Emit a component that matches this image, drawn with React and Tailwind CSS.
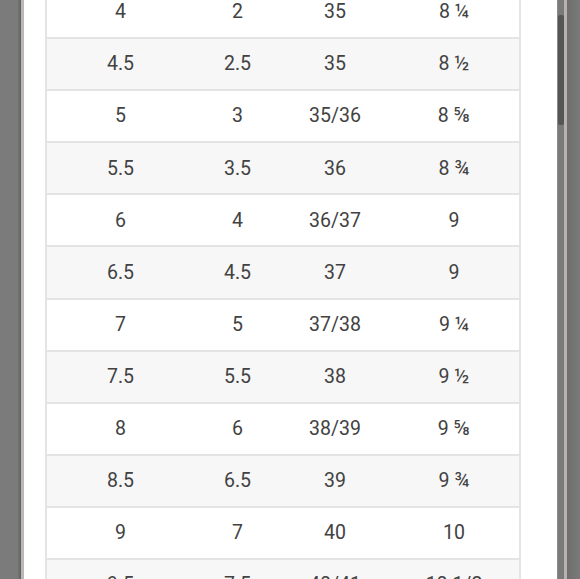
const rows = [
  ["4", "2", "35", "8 ¼"],
  ["4.5", "2.5", "35", "8 ½"],
  ["5", "3", "35/36", "8 ⅝"],
  ["5.5", "3.5", "36", "8 ¾"],
  ["6", "4", "36/37", "9"],
  ["6.5", "4.5", "37", "9"],
  ["7", "5", "37/38", "9 ¼"],
  ["7.5", "5.5", "38", "9 ½"],
  ["8", "6", "38/39", "9 ⅝"],
  ["8.5", "6.5", "39", "9 ¾"],
  ["9", "7", "40", "10"],
  ["9.5", "7.5", "40/41", "10 1/2"],
];

export default function App() {
  return (
    <div className="flex h-[579px] w-[580px] overflow-hidden bg-[#7a7a7a]" style={{ fontFamily: "Roboto, 'Noto Sans', sans-serif" }}>
      <div className="w-[18px] bg-[#7b7b7b]" />
      <div className="w-[3px] bg-gradient-to-r from-[#747474] to-[#626262]" />
      <div className="w-[3px] bg-[#bcb6b4]" />
      <div className="w-[533px] overflow-hidden bg-white pl-[21px] pr-[36px]">
        <div className="-mt-[13px] border-x-2 border-[#e4e4e4]">
          {rows.map((r, i) => (
            <div
              key={i}
              className={`grid h-[52.1px] grid-cols-[147px_87px_108px_130px] items-center border-b-2 border-[#e4e4e4] text-[19.5px] text-[#424242] ${i % 2 === 1 ? "bg-[#f7f7f7]" : "bg-white"}`}
            >
              {r.map((c, j) => (
                <div key={j} className="text-center leading-none">{c}</div>
              ))}
            </div>
          ))}
        </div>
      </div>
      <div className="w-[1px] bg-[#8a8a8a]" />
      <div className="flex w-[6px] flex-col bg-[#7a7a7a] pt-[15px]">
        <div className="h-[110px] w-[6px] rounded-[2px] bg-[#555555]" />
      </div>
      <div className="w-[3px] bg-[#b8b1af]" />
      <div className="w-[13px] bg-gradient-to-r from-[#6e6e6e] to-[#7a7a7a]" />
    </div>
  );
}
